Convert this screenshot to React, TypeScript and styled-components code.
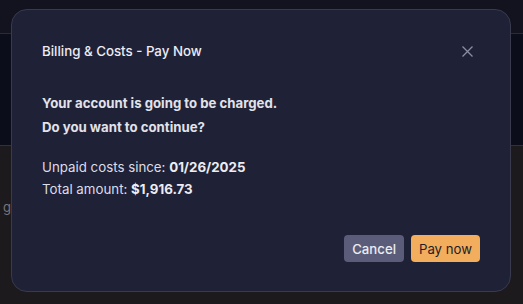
import React from "react";
import styled, { createGlobalStyle } from "styled-components";

const Global = createGlobalStyle`
  html, body { margin: 0; padding: 0; }
  body {
    width: 523px; height: 304px; overflow: hidden;
    background: #1c1a1d;
    font-family: Inter, "Noto Sans", sans-serif;
    -webkit-font-smoothing: antialiased;
  }
`;

const Page = styled.div`
  display: flex;
  flex-direction: column;
  height: 304px;
  overflow: hidden;
`;

const TopBar = styled.div`
  height: 33px;
  background: #131320;
  border-bottom: 1px solid #2a2a3a;
`;

const Hero = styled.div`
  height: 111px;
  background: #0c0d1a;
  border-bottom: 1px solid #3a3028;
`;

const Content = styled.div`
  flex: 1;
  padding: 53px 0 0 3px;
  color: #77757c;
  font-size: 13px;
`;

const BackText = styled.span`
  display: inline-block;
`;

const Modal = styled.div`
  position: fixed;
  left: 11px;
  top: 9px;
  width: 500px;
  height: 283px;
  box-sizing: border-box;
  background: #1f2137;
  border: 1px solid #393a4e;
  border-radius: 16px;
  padding: 30px 30px 29px 30px;
  display: flex;
  flex-direction: column;
  color: #e4e4ec;
`;

const Header = styled.div`
  display: flex;
  align-items: center;
  justify-content: space-between;
  height: 22px;
`;

const Title = styled.div`
  font-size: 13.3px;
  font-weight: 500;
  color: #ececf2;
`;

const Close = styled.button`
  background: none;
  border: none;
  padding: 0;
  margin-right: 7px;
  width: 12px;
  height: 12px;
  display: flex;
  align-items: center;
  justify-content: center;
  cursor: pointer;
`;

const Body = styled.div`
  margin-top: 29px;
  display: flex;
  flex-direction: column;
  flex: 1;
`;

const Strong = styled.p`
  margin: 0;
  font-size: 13.2px;
  font-weight: 700;
  line-height: 24px;
  color: #e2e2ea;
`;

const Info = styled.div`
  margin-top: 17px;
`;

const Line = styled.p`
  margin: 0;
  font-size: 13.3px;
  line-height: 22px;
  color: #dcdce6;
  b { font-weight: 700; color: #ececf2; }
`;

const Footer = styled.div`
  margin-top: auto;
  display: flex;
  justify-content: flex-end;
  gap: 7px;
`;

const Button = styled.button<{ $primary?: boolean }>`
  height: 27px;
  padding: 0 ${p => (p.$primary ? "8px" : "8px")};
  border: none;
  border-radius: 4px;
  font-family: Inter, "Noto Sans", sans-serif;
  font-size: 13.2px;
  font-weight: ${p => (p.$primary ? 400 : 500)};
  background: ${p => (p.$primary ? "#f2ad5d" : "#5b5c79")};
  color: ${p => (p.$primary ? "#1f1d25" : "#ececf2")};
  cursor: pointer;
`;

export default function App() {
  return (
    <>
      <Global />
      <Page>
        <TopBar />
        <Hero />
        <Content>
          <BackText>g</BackText>
        </Content>
      </Page>
      <Modal>
        <Header>
          <Title>Billing &amp; Costs - Pay Now</Title>
          <Close aria-label="Close">
            <svg width="11" height="11" viewBox="0 0 11 11">
              <path d="M0.5 0.5 L10.5 10.5 M10.5 0.5 L0.5 10.5" stroke="#8b8da2" strokeWidth="1.3" />
            </svg>
          </Close>
        </Header>
        <Body>
          <Strong>Your account is going to be charged.</Strong>
          <Strong>Do you want to continue?</Strong>
          <Info>
            <Line>Unpaid costs since: <b>01/26/2025</b></Line>
            <Line>Total amount: <b>$1,916.73</b></Line>
          </Info>
          <Footer>
            <Button>Cancel</Button>
            <Button $primary>Pay now</Button>
          </Footer>
        </Body>
      </Modal>
    </>
  );
}
